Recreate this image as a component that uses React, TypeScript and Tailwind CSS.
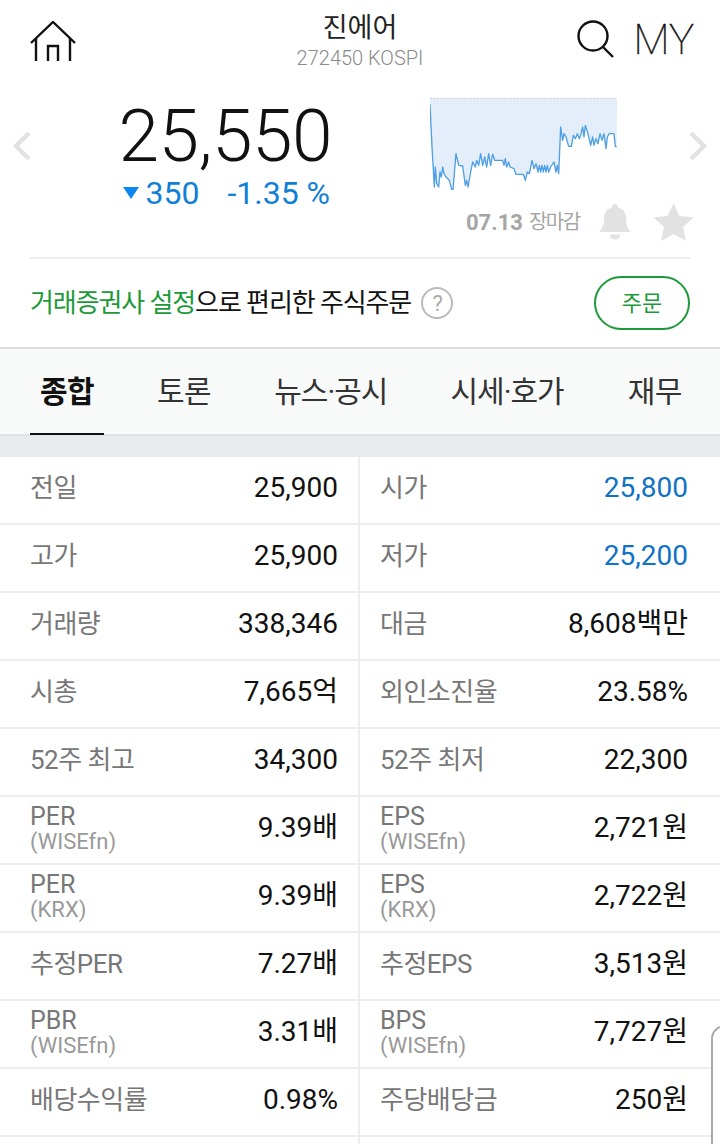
const FONT = "font-['Roboto','Noto_Sans_CJK_KR',sans-serif]";

interface Cell {
  label: string;
  sub?: string;
  value: string;
  blue?: boolean;
}

const ROWS: [Cell, Cell][] = [
  [{ label: "전일", value: "25,900" }, { label: "시가", value: "25,800", blue: true }],
  [{ label: "고가", value: "25,900" }, { label: "저가", value: "25,200", blue: true }],
  [{ label: "거래량", value: "338,346" }, { label: "대금", value: "8,608백만" }],
  [{ label: "시총", value: "7,665억" }, { label: "외인소진율", value: "23.58%" }],
  [{ label: "52주 최고", value: "34,300" }, { label: "52주 최저", value: "22,300" }],
  [{ label: "PER", sub: "(WISEfn)", value: "9.39배" }, { label: "EPS", sub: "(WISEfn)", value: "2,721원" }],
  [{ label: "PER", sub: "(KRX)", value: "9.39배" }, { label: "EPS", sub: "(KRX)", value: "2,722원" }],
  [{ label: "추정PER", value: "7.27배" }, { label: "추정EPS", value: "3,513원" }],
  [{ label: "PBR", sub: "(WISEfn)", value: "3.31배" }, { label: "BPS", sub: "(WISEfn)", value: "7,727원" }],
  [{ label: "배당수익률", value: "0.98%" }, { label: "주당배당금", value: "250원" }],
];

// traced from the reference, in 3x chart coordinates
const LINE =
  "0,22 6,150 13,270 16,210 20,260 26,270 30,225 34,240 38,210 42,230 48,240 58,250 68,290 78,170 86,205 98,207 106,265 110,250 114,270 122,225 128,195 136,210 140,190 146,205 152,170 158,205 164,180 170,210 176,170 182,205 188,172 194,190 206,190 218,190 222,205 226,185 230,210 236,195 240,210 252,215 258,232 280,232 286,250 292,225 298,230 306,190 312,215 318,200 324,225 328,205 332,225 336,205 340,225 344,205 348,225 352,205 356,225 362,210 372,195 378,225 382,205 386,230 392,90 398,130 402,110 408,120 416,148 424,148 430,115 436,125 442,110 448,125 452,115 458,90 462,120 466,85 474,110 482,145 488,120 492,145 498,125 504,140 510,110 516,130 522,110 528,155 532,120 538,110 552,110 556,148 560,150";

function Sparkline() {
  return (
    <svg viewBox="0 0 564 279" className="w-[188px] h-[93px]">
      <polygon points={`0,4 ${LINE} 561,4`} fill="#e3eefa" />
      <line x1="0" y1="4" x2="561" y2="4" stroke="#c9cdd2" strokeWidth="3" strokeDasharray="6 4" />
      <polyline points={LINE} fill="none" stroke="#4f9fe4" strokeWidth="4" strokeLinejoin="round" />
    </svg>
  );
}

function Chevron({ flip }: { flip?: boolean }) {
  return (
    <svg viewBox="0 0 20 32" className="w-[20px] h-[32px]">
      <polyline
        points={flip ? "3,3 16,16 3,29" : "17,3 4,16 17,29"}
        fill="none"
        stroke="#e2e2e2"
        strokeWidth="4.5"
      />
    </svg>
  );
}

function DataCell({ cell, right }: { cell: Cell; right?: boolean }) {
  return (
    <div className={`flex-1 flex items-center justify-between pb-[5px] ${right ? "pl-[20px] pr-[32px]" : "pl-[30px] pr-[20px]"}`}>
      {cell.sub ? (
        <div className="flex flex-col pt-[2px]">
          <span className="text-[25px] leading-[25px] text-[#777777]">{cell.label}</span>
          <span className="text-[22px] leading-[25px] text-[#999999]">{cell.sub}</span>
        </div>
      ) : (
        <span className="pt-[2px] text-[26px] tracking-[-0.5px] text-[#777777]">{cell.label}</span>
      )}
      <span className={`text-[28px] ${cell.blue ? "text-[#0f72c4]" : "text-[#111]"}`}>{cell.value}</span>
    </div>
  );
}

export default function App() {
  return (
    <div className={`${FONT} relative w-[720px] h-[1144px] overflow-hidden bg-white`}>
      {/* Header */}
      <div className="flex h-[92px] items-start">
        <div className="w-[190px] pl-[30px] pt-[21px]">
          <svg viewBox="0 0 46 40" className="w-[46px] h-[40px]" fill="none" stroke="#111" strokeWidth="2.4">
            <polyline points="1,22 23,1 45,22" />
            <line x1="6" y1="17" x2="6" y2="40" />
            <line x1="40" y1="17" x2="40" y2="40" />
            <polyline points="18,40 18,25 28,25 28,40" />
          </svg>
        </div>
        <div className="flex-1 flex flex-col items-center pt-[10px]">
          <span className="text-[27px] leading-[36px] text-[#222]">진에어</span>
          <span className="text-[20px] leading-[25px] font-light text-[#8a8a8a]">272450 KOSPI</span>
        </div>
        <div className="w-[190px] flex items-start justify-end pr-[26px] pt-[20px] gap-[18px]">
          <svg viewBox="0 0 38 38" className="w-[38px] h-[38px]" fill="none" stroke="#111" strokeWidth="2.4">
            <circle cx="16" cy="16" r="14.5" />
            <line x1="26" y1="27" x2="36" y2="37" />
          </svg>
          <span className="text-[42px] leading-[40px] font-thin [-webkit-text-stroke:0.5px_#111] text-[#111]">MY</span>
        </div>
      </div>

      {/* Price */}
      <div className="flex h-[165px]">
        <div className="w-[120px] shrink-0 pl-[12px] pt-[38px]">
          <Chevron />
        </div>
        <div className="w-[212px] shrink-0 flex flex-col items-end pt-[4px]">
          <span className="text-[73px] leading-[80px] font-light text-[#111] tracking-[-0.5px]">25,550</span>
          <div className="flex items-center text-[32px] leading-[34px] text-[#0f7fd8] mr-[2px]">
            <svg viewBox="0 0 16 12" className="w-[16px] h-[12px] mr-[6px]">
              <polygon points="0,0 16,0 8,12" fill="#0d87f0" />
            </svg>
            <span>350</span>
            <span className="ml-[28px]">-1.35 %</span>
          </div>
        </div>
        <div className="flex-1 min-w-0 flex flex-col pl-[98px] pt-[5px]">
          <Sparkline />
          <div className="flex items-center mt-[13px] ml-[36px] whitespace-nowrap">
            <span className="text-[22px] font-bold text-[#a6a6a6]">07.13</span>
            <span className="text-[20px] tracking-[-1.5px] text-[#a6a6a6] ml-[6px]">장마감</span>
            <svg viewBox="0 0 32 36" className="w-[32px] h-[36px] ml-[19px] shrink-0" fill="#e2e2e2">
              <path d="M16 0c2 0 3 1.500 3 3.500 6 1.500 8 6 8 11 0 7 2 10 5 13.500H0c3-3.500 5-6.500 5-13.500 0-5 2-9.500 8-11C13 1.500 14 0 16 0z" />
              <path d="M11 30.500h10c0 3-2 5-5 5s-5-2-5-5z" />
            </svg>
            <svg viewBox="0 0 40 38" className="w-[41px] h-[38px] ml-[22px] shrink-0" fill="#e2e2e2">
              <polygon points="20,0 26,13 40,14.500 29.500,24 32.500,38 20,31 7.500,38 10.500,24 0,14.500 14,13" />
            </svg>
          </div>
        </div>
        <div className="w-[30px] shrink-0 pt-[38px] ml-[-2px] mr-[2px]">
          <Chevron flip />
        </div>
      </div>

      {/* Order row */}
      <div className="mx-[30px] h-[90px] border-t-2 border-[#eeeeee] flex items-center justify-between">
        <div className="flex items-center text-[26px] tracking-[-1.1px] text-[#111]">
          <span className="text-[#1c9a3a]">거래증권사 설정</span>
          <span>으로 편리한 주식주문</span>
          <span className="ml-[10px] flex w-[32px] h-[32px] items-center justify-center rounded-full border-2 border-[#bbbbbb] text-[22px] text-[#aaaaaa]">
            ?
          </span>
        </div>
        <div className="w-[96px] h-[54px] rounded-[27px] border-2 border-[#1c9a3a] flex items-center justify-center text-[22px] text-[#1c9a3a]">
          주문
        </div>
      </div>

      {/* Tabs */}
      <div className="h-[89px] border-t-2 border-b-2 border-t-[#dddddd] border-b-[#dfe2e5] bg-[#f8f9f9] flex items-stretch pl-[30px] gap-[64px] text-[30px] tracking-[-0.5px] text-[#333]">
        <div className="w-[74px] mr-[-11px] flex items-center justify-center font-bold text-[#111] border-b-2 border-[#111] mb-[-1px]">종합</div>
        <div className="flex items-center">토론</div>
        <div className="flex items-center tracking-[-1px] ml-[-1px]">뉴스·공시</div>
        <div className="flex items-center tracking-[-1px] ml-[-1px]">시세·호가</div>
        <div className="flex items-center">재무</div>
      </div>
      <div className="h-[21px] bg-[#e8ebee]" />

      {/* Quote table */}
      <div className="flex flex-col">
        {ROWS.map(([left, right], i) => (
          <div key={i} className="h-[68px] flex border-b-2 border-[#eeeeee]">
            <div className="w-[360px] flex border-r-2 border-[#eeeeee]">
              <DataCell cell={left} />
            </div>
            <div className="flex-1 flex">
              <DataCell cell={right} right />
            </div>
          </div>
        ))}
        <div className="h-[10px] flex">
          <div className="w-[360px] border-r-2 border-[#eeeeee]" />
        </div>
      </div>

      {/* Pull handle at the screen edge */}
      <div className="absolute left-[711px] top-[1025px] w-[20px] h-[130px] rounded-tl-[14px] border-l-2 border-t-2 border-[#a9a9a9] bg-white" />
    </div>
  );
}
